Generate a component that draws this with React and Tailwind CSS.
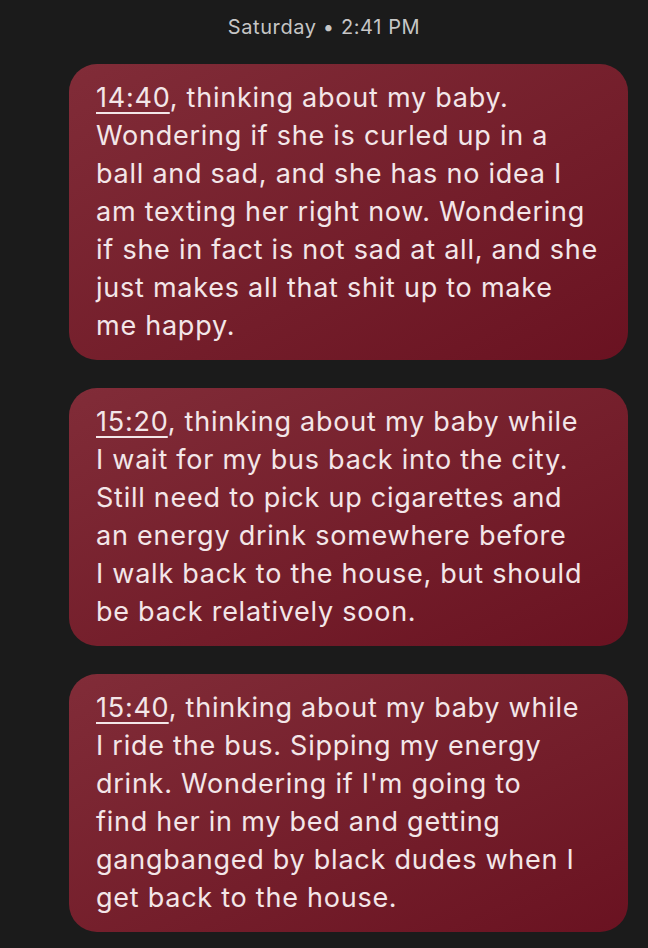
const messages = [
  {
    time: "14:40",
    lines: [
      ", thinking about my baby.",
      "Wondering if she is curled up in a",
      "ball and sad, and she has no idea I",
      "am texting her right now. Wondering",
      "if she in fact is not sad at all, and she",
      "just makes all that shit up to make",
      "me happy.",
    ],
  },
  {
    time: "15:20",
    lines: [
      ", thinking about my baby while",
      "I wait for my bus back into the city.",
      "Still need to pick up cigarettes and",
      "an energy drink somewhere before",
      "I walk back to the house, but should",
      "be back relatively soon.",
    ],
  },
  {
    time: "15:40",
    lines: [
      ", thinking about my baby while",
      "I ride the bus. Sipping my energy",
      "drink. Wondering if I'm going to",
      "find her in my bed and getting",
      "gangbanged by black dudes when I",
      "get back to the house.",
    ],
  },
];

function Bubble({ time, lines }) {
  return (
    <div className="rounded-[28px] bg-gradient-to-br from-[#812c38] to-[#6a1221] pl-[27px] pr-4 py-[15px] text-[#f3e6e8] text-[27px] leading-[38px] tracking-[0.75px]">
      {lines.map((line, i) => (
        <div key={i} className="whitespace-nowrap">
          {i === 0 && (
            <span className="underline decoration-[2px] underline-offset-[5px]">{time}</span>
          )}
          {line}
        </div>
      ))}
    </div>
  );
}

export default function App() {
  return (
    <div
      className="min-h-[948px] bg-[#1b1b1b] overflow-hidden"
      style={{ fontFamily: "Inter, Roboto, sans-serif" }}
    >
      <div className="pt-[13px] text-center text-[20px] leading-[28px] tracking-[0.6px] text-[#c6c6c6]">
        Saturday • 2:41 PM
      </div>
      <div className="flex flex-col gap-[28px] pl-[69px] pr-5 pt-[23px]">
        {messages.map((m) => (
          <Bubble key={m.time} time={m.time} lines={m.lines} />
        ))}
      </div>
    </div>
  );
}
